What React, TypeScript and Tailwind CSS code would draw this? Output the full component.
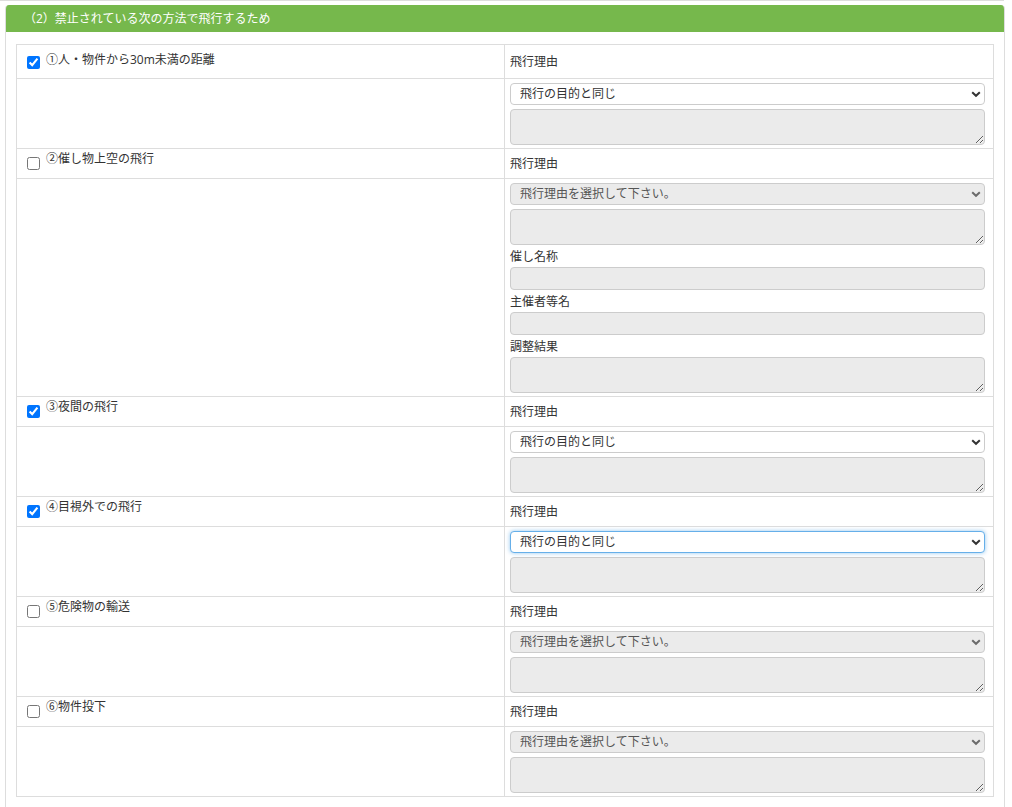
import React from 'react';

interface Item {
  label: string;
  checked: boolean;
  focused?: boolean;
  event?: boolean;
}

const items: Item[] = [
  { label: '①人・物件から30m未満の距離', checked: true },
  { label: '②催し物上空の飛行', checked: false, event: true },
  { label: '③夜間の飛行', checked: true },
  { label: '④目視外での飛行', checked: true, focused: true },
  { label: '⑤危険物の輸送', checked: false },
  { label: '⑥物件投下', checked: false },
];

const Chevron: React.FC<{ muted?: boolean }> = ({ muted }) => (
  <svg
    width="10"
    height="10"
    viewBox="0 0 10 10"
    className="pointer-events-none absolute right-[4px] top-1/2 -translate-y-1/2"
  >
    <path
      d="M1.2 3.2 L5 6.8 L8.8 3.2"
      fill="none"
      stroke={muted ? '#6b6b6b' : '#333'}
      strokeWidth="2"
    />
  </svg>
);

const ReasonSelect: React.FC<{ enabled: boolean; focused?: boolean }> = ({ enabled, focused }) => {
  const text = enabled ? '飛行の目的と同じ' : '飛行理由を選択して下さい。';
  let cls = 'bg-white border-[#ccc] text-[#333]';
  if (!enabled) cls = 'bg-[#ebebeb] border-[#ccc] text-[#555]';
  if (focused) cls = 'bg-white border-[#66afe9] text-[#333] shadow-[0_0_4px_rgba(102,175,233,0.7)]';
  return (
    <div className="relative">
      <select
        defaultValue={text}
        className={`block h-[22px] w-full appearance-none rounded-[4px] border pl-[9px] pr-6 text-[12px] leading-[20px] outline-none ${cls}`}
      >
        <option value={text}>{text}</option>
      </select>
      <Chevron muted={!enabled} />
    </div>
  );
};

const GrayArea: React.FC = () => (
  <textarea
    readOnly
    className="block h-[36px] w-full rounded-[4px] border border-[#ccc] bg-[#ebebeb] outline-none"
  />
);

const GrayInput: React.FC = () => (
  <input
    readOnly
    className="block h-[23px] w-full rounded-[4px] border border-[#ccc] bg-[#ebebeb] outline-none"
  />
);

const FieldLabel: React.FC<{ text: string }> = ({ text }) => (
  <div className="h-[22px] pt-[3px] text-[12px] leading-[18px]">{text}</div>
);

export default function App() {
  return (
    <div
      className="min-h-screen bg-white text-[#333]"
      style={{ fontFamily: '"Open Sans", "Noto Sans CJK JP", "Noto Sans", sans-serif' }}
    >
      <div className="h-px w-[1004px] bg-[#ddd]" />
      <div className="ml-[5px] mt-[4px] w-[1000px] overflow-hidden rounded-t-[4px] border-x border-b border-[#ddd]">
        <div className="flex h-[27px] items-center bg-[#76b84c] pl-[18px] text-[12px] text-white">
          （2）禁止されている次の方法で飛行するため
        </div>
        <div className="px-[10px] pb-[10px] pt-[12px]">
          <div className="border border-[#ddd]">
            {items.map((item, i) => {
              const enabled = item.checked;
              const last = i === items.length - 1;
              return (
                <React.Fragment key={item.label}>
                  <div
                    className={`grid grid-cols-[488px_1fr] border-b border-[#ddd] ${
                      i === 0 ? 'h-[34px]' : 'h-[30px]'
                    }`}
                  >
                    <label
                      className={`flex items-start gap-[6px] border-r border-[#ddd] pl-[10px] ${
                        i === 0 ? 'pt-[5px]' : 'pt-[2px]'
                      }`}
                    >
                      <input
                        type="checkbox"
                        defaultChecked={item.checked}
                        className="m-0 mt-[6px] h-[13px] w-[13px] shrink-0"
                      />
                      <span className={`text-[12px] leading-[16px] ${i === 0 ? 'mt-[2px]' : ''}`}>
                        {item.label}
                      </span>
                    </label>
                    <div className="flex items-center pl-[5px] text-[12px]">飛行理由</div>
                  </div>
                  <div
                    className={`grid grid-cols-[488px_1fr] ${last ? '' : 'border-b border-[#ddd]'}`}
                  >
                    <div className="border-r border-[#ddd]" />
                    <div className="pb-[3px] pl-[5px] pr-[8px] pt-[4px]">
                      <ReasonSelect enabled={enabled} focused={item.focused} />
                      <div className="mt-[4px]">
                        <GrayArea />
                      </div>
                      {item.event && (
                        <>
                          <FieldLabel text="催し名称" />
                          <GrayInput />
                          <FieldLabel text="主催者等名" />
                          <GrayInput />
                          <FieldLabel text="調整結果" />
                          <GrayArea />
                        </>
                      )}
                    </div>
                  </div>
                </React.Fragment>
              );
            })}
          </div>
        </div>
      </div>
    </div>
  );
}
